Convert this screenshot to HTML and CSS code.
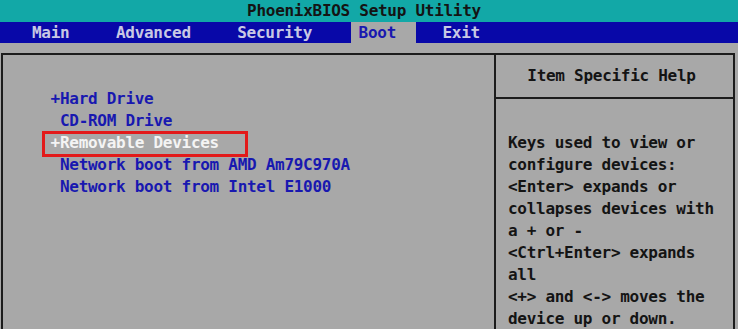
FILE: index.html
```html
<!DOCTYPE html>
<html lang="en">

<head>
    <meta charset="UTF-8">
    <meta name="viewport" content="width=device-width, initial-scale=1.0">
    <title>PhoenixBIOS Setup Utility</title>
    <link rel="stylesheet" href="styles.css">
</head>

<body>
    <header class="title-bar">PhoenixBIOS Setup Utility</header>
    <nav class="menu-bar">
        <span class="tab">Main</span>
        <span class="tab">Advanced</span>
        <span class="tab">Security</span>
        <span class="tab active">Boot</span>
        <span class="tab">Exit</span>
    </nav>
    <main class="frame">
        <section class="boot-list">
            <div class="item">+Hard Drive</div>
            <div class="item"> CD-ROM Drive</div>
            <div class="item selected">+Removable Devices</div>
            <div class="item"> Network boot from AMD Am79C970A</div>
            <div class="item"> Network boot from Intel E1000</div>
        </section>
        <aside class="help">
            <div class="help-title">Item Specific Help</div>
            <div class="help-body">
                <div>Keys used to view or</div>
                <div>configure devices:</div>
                <div>&lt;Enter&gt; expands or</div>
                <div>collapses devices with</div>
                <div>a + or -</div>
                <div>&lt;Ctrl+Enter&gt; expands</div>
                <div>all</div>
                <div>&lt;+&gt; and &lt;-&gt; moves the</div>
                <div>device up or down.</div>
            </div>
        </aside>
    </main>
</body>

</html>
```

FILE: styles.css
```css
html,
body {
    margin: 0;
    height: 329px;
    overflow: hidden;
}

body {
    background-color: #a8a8a8;
    font-family: "DejaVu Sans Mono", "Liberation Mono", monospace;
    font-weight: bold;
    font-size: 16px;
    letter-spacing: -0.28px;
}

.title-bar {
    background-color: #12a8a7;
    color: #141414;
    height: 22px;
    line-height: 22px;
    text-align: center;
    padding-right: 10px;
}

.menu-bar {
    display: flex;
    gap: 18.5px;
    background-color: #0808a8;
    color: #c8c8e4;
    height: 21px;
    line-height: 21px;
    padding-left: 24px;
}

.tab {
    padding: 0 20px 0 8px;
}

.tab.active {
    background-color: #a8a8a8;
    color: #1818b0;
}

.frame {
    display: flex;
    box-sizing: border-box;
    width: 734px;
    height: 276px;
    margin: 10px 0 0 1px;
    border: 2px solid #1c1c1c;
    border-bottom: 0;
}

.boot-list {
    flex: 1;
    padding: 33px 0 0 47.6px;
    border-right: 2px solid #1c1c1c;
    color: #1818b0;
    line-height: 22px;
}

.item {
    position: relative;
    width: fit-content;
    white-space: pre;
}

.item.selected {
    color: #f4f4f4;
}

/* red annotation box round the chosen entry */
.item.selected::after {
    content: "";
    position: absolute;
    left: -8.6px;
    top: -1px;
    width: 206px;
    height: 26px;
    box-sizing: border-box;
    border: 3px solid #e21a1a;
}

.help {
    width: 237px;
    color: #141414;
}

.help-title {
    height: 42px;
    line-height: 42px;
    text-align: center;
    padding-right: 6px;
    border-bottom: 2px solid #1c1c1c;
}

.help-body {
    padding: 33px 0 0 12px;
    line-height: 22px;
}

.help-body div {
    white-space: pre;
}
```
